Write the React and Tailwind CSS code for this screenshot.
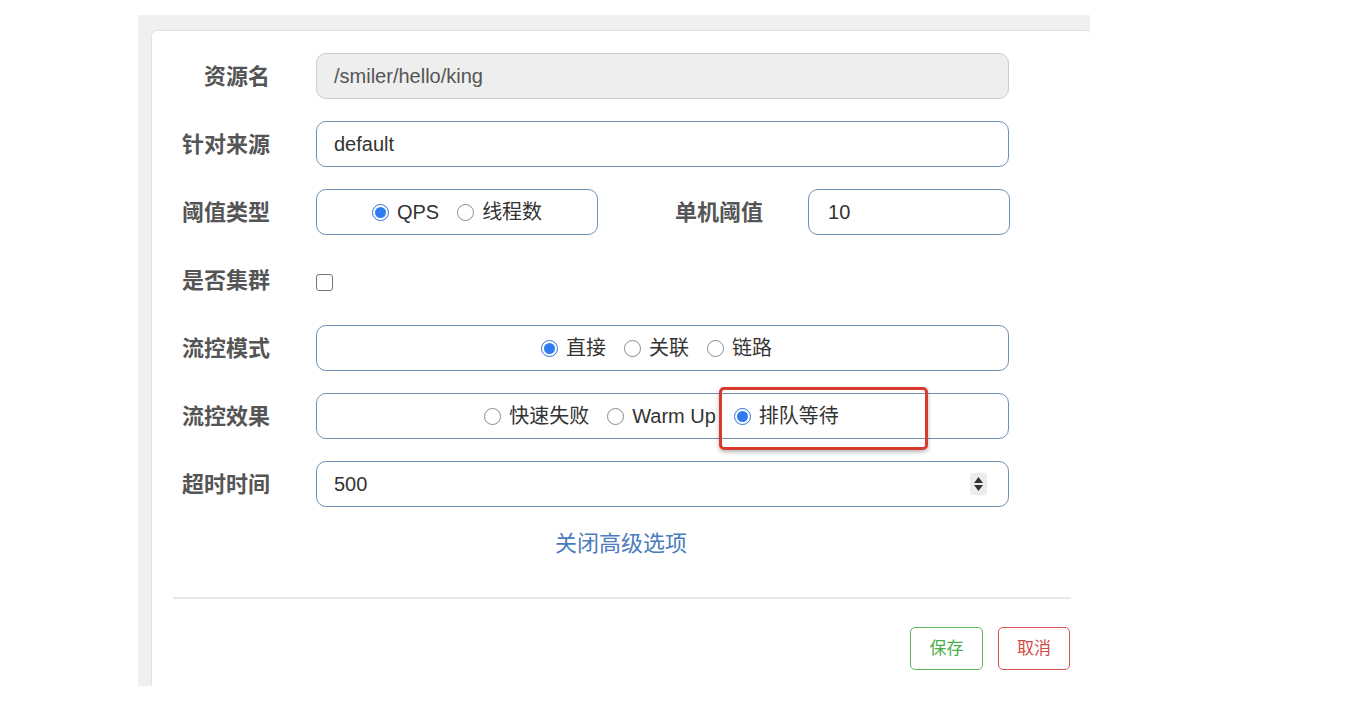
import React from "react";

const font = { fontFamily: '"Liberation Sans", "Noto Sans CJK SC", sans-serif' };

function Radio({ checked, label }) {
  return (
    <span className="flex items-center gap-[8px] mx-[9px]">
      {checked ? (
        <span className="w-[17px] h-[17px] rounded-full border border-[#2f6fe0] flex items-center justify-center bg-white">
          <span className="w-[11px] h-[11px] rounded-full bg-[#2f7bf0]"></span>
        </span>
      ) : (
        <span className="w-[17px] h-[17px] rounded-full border border-[#8a8a8a] bg-white"></span>
      )}
      <span>{label}</span>
    </span>
  );
}

function Label({ children }) {
  return (
    <div className="w-[118px] shrink-0 text-right text-[22px] font-bold text-[#555]">
      {children}
    </div>
  );
}

function Row({ label, children }) {
  return (
    <div className="flex items-center h-[46px]">
      <Label>{label}</Label>
      <div className="ml-[46px] flex items-center">{children}</div>
    </div>
  );
}

const box =
  "h-[46px] rounded-[10px] border border-[#6e90b6] bg-white flex items-center text-[20px] text-[#333]";

export default function App() {
  return (
    <div className="w-[1350px] h-[702px] bg-white" style={font}>
      <div className="ml-[138px] mt-[15px] w-[952px] h-[671px] bg-[#f0f0f0] overflow-hidden pl-[13px] pt-[15px]">
        <div className="relative bg-white h-[700px] rounded-tl-[6px] rounded-tr-[4px] border-l border-t border-[#e2e2e2] pt-[22px]">
          <div className="flex flex-col gap-[22px]">
            <Row label="资源名">
              <div className={`${box} w-[693px] !bg-[#eeeeee] !border-[#cccccc] px-[17px] !text-[#555]`}>
                /smiler/hello/king
              </div>
            </Row>
            <Row label="针对来源">
              <div className={`${box} w-[693px] px-[17px]`}>default</div>
            </Row>
            <Row label="阈值类型">
              <div className={`${box} w-[282px] justify-center`}>
                <Radio checked label="QPS" />
                <Radio label="线程数" />
              </div>
              <div className="ml-[77px] text-[22px] font-bold text-[#555]">单机阈值</div>
              <div className={`${box} w-[202px] ml-[45px] px-[19px]`}>10</div>
            </Row>
            <Row label="是否集群">
              <span className="w-[17px] h-[17px] mt-[4px] rounded-[3px] border border-[#767676] bg-white"></span>
            </Row>
            <Row label="流控模式">
              <div className={`${box} w-[693px] justify-center`}>
                <span className="ml-[-12px] flex items-center">
                  <Radio checked label="直接" />
                  <Radio label="关联" />
                  <Radio label="链路" />
                </span>
              </div>
            </Row>
            <Row label="流控效果">
              <div className={`${box} w-[693px] justify-center`}>
                <span className="ml-[-2px] flex items-center">
                  <Radio label="快速失败" />
                  <Radio label="Warm Up" />
                  <Radio checked label="排队等待" />
                </span>
              </div>
            </Row>
            <Row label="超时时间">
              <div className={`${box} w-[693px] px-[17px] justify-between`}>
                <span>500</span>
                <span className="w-[17px] h-[22px] bg-[#ececec] rounded-[3px] flex flex-col items-center justify-center gap-[2px] mr-[4px]">
                  <svg width="9" height="6" viewBox="0 0 9 6"><path d="M4.5 0 L9 6 L0 6 Z" fill="#333" /></svg>
                  <svg width="9" height="6" viewBox="0 0 9 6"><path d="M0 0 L9 0 L4.5 6 Z" fill="#333" /></svg>
                </span>
              </div>
            </Row>
          </div>

          <div className="mt-[20px] text-center text-[22px] text-[#4a7cbc]">
            关闭高级选项
          </div>

          <div className="mt-[37px] ml-[21px] mr-[19px] h-[2px] bg-[#e8e8e8]"></div>

          <div className="mt-[28px] mr-[20px] flex justify-end gap-[15px]">
            <button className="w-[73px] h-[43px] rounded-[5px] border border-[#5cb85c] text-[#4cae4c] text-[17px] bg-white">
              保存
            </button>
            <button className="w-[72px] h-[43px] rounded-[5px] border border-[#d9534f] text-[#d24a46] text-[17px] bg-white">
              取消
            </button>
          </div>

          <div className="absolute left-[567px] top-[356px] w-[209px] h-[63px] border-[3px] border-[#d93a2e] rounded-[5px] shadow-[0_2px_4px_rgba(0,0,0,0.3)]"></div>
        </div>
      </div>
    </div>
  );
}
